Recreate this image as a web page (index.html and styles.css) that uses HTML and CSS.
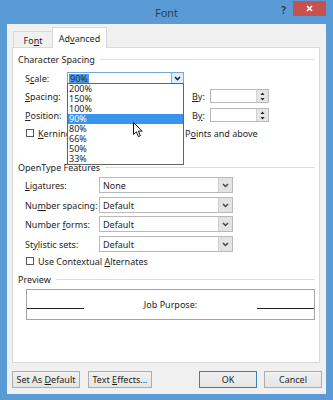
FILE: index.html
```html
<!DOCTYPE html>
<html lang="en">
<head>
    <meta charset="UTF-8">
    <title>Font</title>
    <link rel="stylesheet" href="styles.css">
</head>
<body>

    <div class="window">
        <div class="titlebar">
            <div class="title">Font</div>
            <div class="controls">
                <span class="help">?</span>
                <span class="close">
                    <svg width="7" height="7" viewBox="0 0 7 7"><path d="M1 1 L6 6 M6 1 L1 6" stroke="#fff" stroke-width="1.6"/></svg>
                </span>
            </div>
        </div>

        <div class="client">
            <div class="tabs">
                <div class="tab"><span>Fo<u>n</u>t</span></div>
                <div class="tab active"><span>Ad<u>v</u>anced</span></div>
            </div>

            <div class="panel">
                <div class="group">Character Spacing</div>

                <div class="row row-scale">
                    <span class="lbl">S<u>c</u>ale:</span>
                    <div class="combo combo-scale">
                        <span class="val"><span class="sel">90%</span></span>
                        <span class="arrow"><svg width="7" height="5" viewBox="0 0 7 5"><path d="M1 1 L3.5 3.6 L6 1" fill="none" stroke="#222" stroke-width="1.5"/></svg></span>

                        <!-- open list of the scale combo -->
                        <ul class="dropdown">
                            <li>200%</li>
                            <li>150%</li>
                            <li>100%</li>
                            <li class="hover">90%</li>
                            <li>80%</li>
                            <li>66%</li>
                            <li>50%</li>
                            <li>33%</li>
                        </ul>
                        <svg class="cursor" width="11" height="16" viewBox="0 0 11 16"><path d="M0.5 0.5 L0.5 12.5 L3.4 9.8 L5.4 14.6 L7.4 13.7 L5.4 9.1 L9.2 9.1 Z" fill="#fff" stroke="#111" stroke-width="1"/></svg>
                    </div>
                </div>

                <div class="row row-spin">
                    <span class="lbl"><u>S</u>pacing:</span>
                    <div class="combo combo-small">
                        <span class="val"></span>
                        <span class="arrow"></span>
                    </div>
                    <span class="by"><u>B</u>y:</span>
                    <div class="spin">
                        <span class="spin-val"></span>
                        <span class="spin-btn">
                            <svg width="5" height="9" viewBox="0 0 5 9"><path d="M2.5 0.5 L4.5 3 L0.5 3 Z M0.5 6 L4.5 6 L2.5 8.5 Z" fill="#222"/></svg>
                        </span>
                    </div>
                </div>

                <div class="row row-spin">
                    <span class="lbl"><u>P</u>osition:</span>
                    <div class="combo combo-small">
                        <span class="val"></span>
                        <span class="arrow"></span>
                    </div>
                    <span class="by">B<u>y</u>:</span>
                    <div class="spin">
                        <span class="spin-val"></span>
                        <span class="spin-btn">
                            <svg width="5" height="9" viewBox="0 0 5 9"><path d="M2.5 0.5 L4.5 3 L0.5 3 Z M0.5 6 L4.5 6 L2.5 8.5 Z" fill="#222"/></svg>
                        </span>
                    </div>
                </div>

                <div class="row row-check row-kern">
                    <div class="kern">
                        <span class="check"></span>
                        <span class="check-text"><u>K</u>erning for fonts:</span>
                    </div>
                    <span class="points">P<u>o</u>ints and above</span>
                </div>

                <div class="group group-ot">OpenType Features</div>

                <div class="row row-ot">
                    <span class="lbl lbl-wide"><u>L</u>igatures:</span>
                    <div class="combo combo-wide">
                        <span class="val">None</span>
                        <span class="arrow"><svg width="7" height="5" viewBox="0 0 7 5"><path d="M1 1 L3.5 3.6 L6 1" fill="none" stroke="#444" stroke-width="1.4"/></svg></span>
                    </div>
                </div>
                <div class="row row-ot">
                    <span class="lbl lbl-wide">Nu<u>m</u>ber spacing:</span>
                    <div class="combo combo-wide">
                        <span class="val">Default</span>
                        <span class="arrow"><svg width="7" height="5" viewBox="0 0 7 5"><path d="M1 1 L3.5 3.6 L6 1" fill="none" stroke="#444" stroke-width="1.4"/></svg></span>
                    </div>
                </div>
                <div class="row row-ot tight">
                    <span class="lbl lbl-wide">Number <u>f</u>orms:</span>
                    <div class="combo combo-wide">
                        <span class="val">Default</span>
                        <span class="arrow"><svg width="7" height="5" viewBox="0 0 7 5"><path d="M1 1 L3.5 3.6 L6 1" fill="none" stroke="#444" stroke-width="1.4"/></svg></span>
                    </div>
                </div>
                <div class="row row-ot">
                    <span class="lbl lbl-wide">St<u>y</u>listic sets:</span>
                    <div class="combo combo-wide">
                        <span class="val">Default</span>
                        <span class="arrow"><svg width="7" height="5" viewBox="0 0 7 5"><path d="M1 1 L3.5 3.6 L6 1" fill="none" stroke="#444" stroke-width="1.4"/></svg></span>
                    </div>
                </div>

                <div class="row row-check row-alt">
                    <span class="check"></span>
                    <span class="check-text">Use Contextual <u>A</u>lternates</span>
                </div>

                <div class="group group-preview">Preview</div>

                <div class="preview">
                    <span class="rule"></span>
                    <span class="sample">Job Purpose:</span>
                    <span class="rule"></span>
                </div>
            </div>

            <div class="buttons">
                <div class="btn btn-default"><span>Set As <u>D</u>efault</span></div>
                <div class="btn btn-effects"><span>Text <u>E</u>ffects...</span></div>
                <div class="btn btn-ok"><span>OK</span></div>
                <div class="btn btn-cancel"><span>Cancel</span></div>
            </div>
        </div>
    </div>

</body>
</html>
```

FILE: styles.css
```css
body {
    margin: 0;
    font-family: 'Noto Sans', 'Open Sans', sans-serif;
    font-size: 9px;
    color: #1e1e1e;
}
.window {
    width: 333px;
    height: 400px;
    background-color: #5a9bd6;
    display: flex;
    flex-direction: column;
}
.titlebar {
    height: 24px;
    flex: none;
    display: grid;
    grid-template-columns: 1fr auto 1fr;
}
.title {
    grid-column: 2;
    font-size: 11px;
    line-height: 25px;
    color: #27405c;
}
.controls {
    grid-column: 3;
    justify-self: end;
    display: flex;
    align-items: flex-start;
}
.help {
    font-size: 10px;
    font-weight: bold;
    color: #27405c;
    margin: 3px 7px 0 0;
}
.close {
    width: 33px;
    height: 15px;
    margin: 1px 7px 0 0;
    background-color: #c75050;
    display: flex;
    align-items: center;
    justify-content: center;
}
.client {
    flex: 1;
    margin: 0 7px 6px;
    padding: 0 4px 0 5px;
    background-color: #f0f0f0;
    display: flex;
    flex-direction: column;
}

/* tabs */
.tabs {
    height: 24px;
    flex: none;
    display: flex;
    align-items: flex-end;
    padding-left: 1px;
    position: relative;
    z-index: 1;
}
.tab {
    box-sizing: border-box;
    width: 39px;
    height: 16px;
    margin-bottom: 1px;
    border: 1px solid #d9d9d9;
    border-bottom: none;
    border-right: none;
    background-color: #f0f0f0;
    display: flex;
    align-items: center;
    justify-content: center;
    padding-top: 2px;
}
.tab.active {
    width: 55px;
    height: 21px;
    margin-bottom: 0;
    border-right: 1px solid #d9d9d9;
    background-color: #fff;
    padding-top: 1px;
}

/* page */
.panel {
    box-sizing: border-box;
    height: 316px;
    margin: -1px 2px 0 0;
    padding: 5px 4px 0 5px;
    background-color: #fff;
    border: 1px solid #d9d9d9;
    flex: none;
}
.group {
    height: 12px;
    display: flex;
    align-items: center;
    color: #1e1e1e;
}
.group::after {
    content: "";
    flex: 1;
    height: 1px;
    background-color: #dedede;
    margin-left: 5px;
}
.group-ot {
    margin-top: 24px;
}
.group-preview {
    margin-top: 8px;
}
.row {
    display: flex;
    align-items: center;
}
.lbl {
    flex: none;
    width: 42px;
    margin-left: 7px;
}
.lbl-wide {
    width: 74px;
}
.row-scale {
    height: 12px;
    margin-top: 7px;
}
.row-spin {
    height: 14px;
    margin-top: 5px;
}
.row-ot {
    height: 16px;
    margin-top: 4px;
}
.row-ot.tight {
    margin-top: 3px;
}
.row-check {
    height: 8px;
}
.row-kern {
    margin-top: 7px;
}
.row-alt {
    margin-top: 5px;
}

/* combos */
.combo {
    box-sizing: border-box;
    height: 100%;
    border: 1px solid #b9b9b9;
    background-color: #fff;
    display: flex;
    flex: none;
}
.combo .val {
    flex: 1;
    padding-left: 3px;
    display: flex;
    align-items: center;
}
.combo .arrow {
    width: 13px;
    background-color: #e3e3e3;
    border-left: 1px solid #cfcfcf;
    display: flex;
    align-items: center;
    justify-content: center;
}
.combo-scale {
    width: 117px;
    position: relative;
    border-color: #7aa7d6;
}
.combo-scale .val {
    padding-left: 1px;
}
.combo-scale .sel {
    background-color: #4f9ae6;
    color: #10294f;
    line-height: 9px;
    padding: 0 1px;
}
.combo-scale .arrow {
    width: 11px;
    background-color: #dcecfc;
    border-left: 1px solid #7eb4ea;
}
.combo-small {
    width: 117px;
}
.combo-wide {
    width: 134px;
}
.dropdown {
    position: absolute;
    top: 10px;
    left: -1px;
    width: 117px;
    box-sizing: border-box;
    margin: 0;
    padding: 0;
    list-style: none;
    background-color: #fff;
    border: 1px solid #646464;
    z-index: 2;
}
.dropdown li {
    height: 10px;
    line-height: 10px;
    padding-left: 1px;
}
.dropdown li.hover {
    background-color: #3a93ec;
    color: #fff;
}
.cursor {
    position: absolute;
    left: 65px;
    top: 49px;
    z-index: 3;
}

/* spin boxes */
.by {
    width: 18px;
    margin-left: 8px;
    flex: none;
}
.spin {
    box-sizing: border-box;
    width: 59px;
    height: 100%;
    border: 1px solid #b9b9b9;
    display: flex;
}
.spin-val {
    flex: 1;
}
.spin-btn {
    width: 11px;
    background-color: #e6e6e6;
    border-left: 1px solid #d3d3d3;
    display: flex;
    align-items: center;
    justify-content: center;
}

/* checkboxes */
.kern {
    width: 41px;
    margin-left: 8px;
    display: flex;
    align-items: center;
    overflow: hidden;
    white-space: nowrap;
    flex: none;
}
.points {
    margin-left: 118px;
}
.check {
    box-sizing: border-box;
    width: 8px;
    height: 8px;
    border: 1px solid #5a5a5a;
    background-color: #fff;
    flex: none;
}
.row-alt .check {
    margin-left: 8px;
}
.check-text {
    margin-left: 4px;
}

/* preview */
.preview {
    box-sizing: border-box;
    height: 31px;
    margin: 4px 0 0 8px;
    border: 1px solid #a5a5a5;
    display: flex;
    align-items: center;
}
.rule {
    width: 57px;
    height: 1px;
    margin-top: 7px;
    background-color: #222;
}
.sample {
    flex: 1;
    text-align: center;
}

/* buttons */
.buttons {
    display: flex;
    height: 17px;
    margin-top: 8px;
}
.btn {
    box-sizing: border-box;
    height: 17px;
    border: 1px solid #acacac;
    background-image: linear-gradient(#f0f0f0, #e5e5e5);
    display: flex;
    align-items: center;
    justify-content: center;
}
.btn-default {
    width: 68px;
}
.btn-effects {
    width: 64px;
    margin-left: 8px;
}
.btn-ok {
    width: 58px;
    margin-left: auto;
    border-color: #3c7fb1;
}
.btn-cancel {
    width: 58px;
    margin-left: 7px;
}
```
